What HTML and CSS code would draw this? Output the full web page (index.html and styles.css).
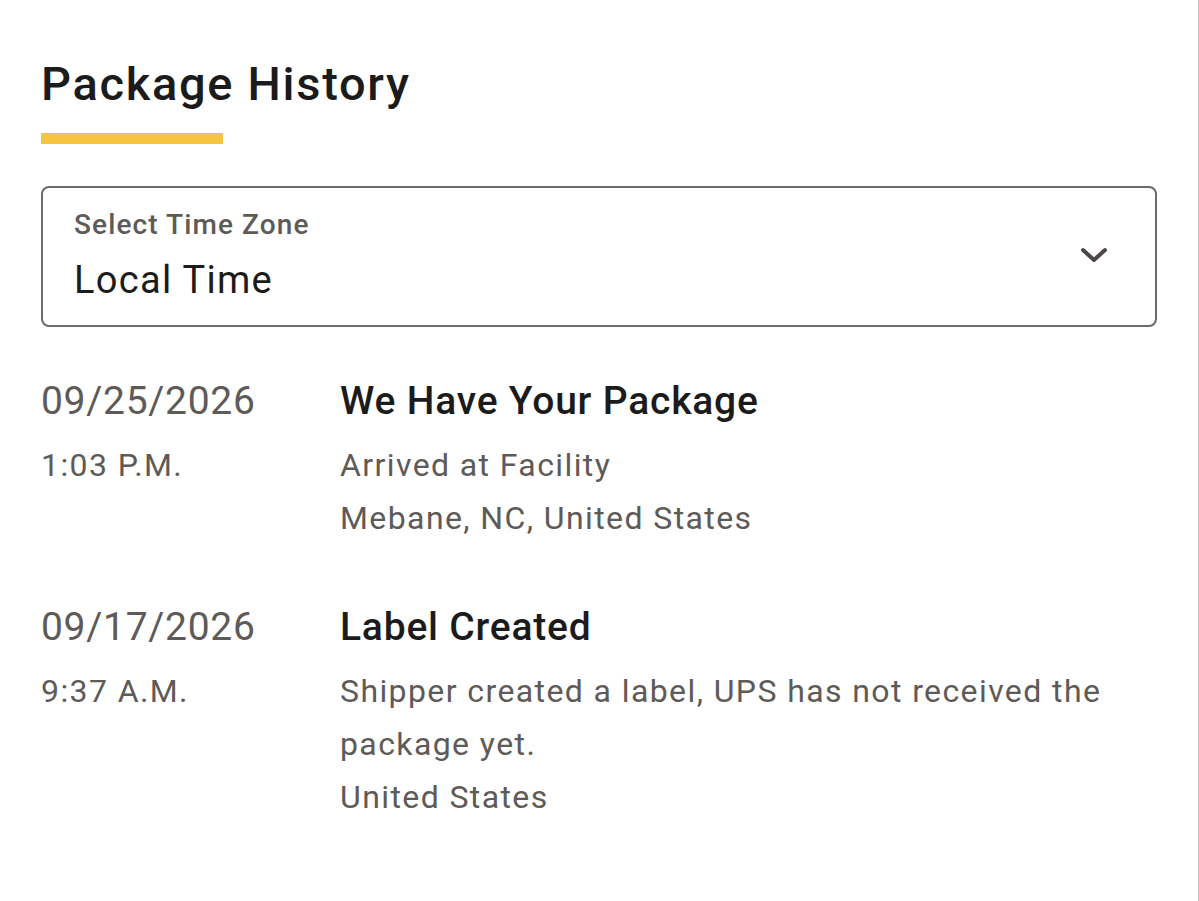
FILE: index.html
```html
<!DOCTYPE html>
<html lang="en">
<head>
  <meta charset="UTF-8" />
  <meta name="viewport" content="width=device-width, initial-scale=1.0" />
  <title>Package History</title>
  <link rel="stylesheet" href="styles.css">
</head>
<body>
  <div class="page">
    <h1 class="title">Package History</h1>
    <div class="title-bar"></div>

    <!-- time zone picker -->
    <div class="tz-select">
      <div class="tz-text">
        <div class="tz-label">Select Time Zone</div>
        <div class="tz-value">Local Time</div>
      </div>
      <svg class="chevron" width="28" height="16" viewBox="0 0 28 16">
        <polyline points="3,3 14,13 25,3" fill="none" stroke="#4d4846" stroke-width="4" stroke-linecap="round" stroke-linejoin="round" />
      </svg>
    </div>

    <!-- history rows -->
    <div class="history">
      <div class="event">
        <div class="when">
          <div class="date">09/25/2026</div>
          <div class="time">1:03 P.M.</div>
        </div>
        <div class="what">
          <div class="status">We Have Your Package</div>
          <div class="detail">Arrived at Facility<br>Mebane, NC, United States</div>
        </div>
      </div>
      <div class="event">
        <div class="when">
          <div class="date">09/17/2026</div>
          <div class="time">9:37 A.M.</div>
        </div>
        <div class="what">
          <div class="status">Label Created</div>
          <div class="detail">Shipper created a label, UPS has not received the package yet.<br>United States</div>
        </div>
      </div>
    </div>
  </div>
</body>
</html>
```

FILE: styles.css
```css
html, body {
  margin: 0;
  background-color: white;
}
body {
  font-family: Roboto, "Noto Sans", sans-serif;
}
.page {
  min-height: 901px;
  box-sizing: border-box;
  padding: 56px 41px 40px 41px;
  border-right: 1px solid #bdbdbd;
}
.title {
  margin: 0;
  font-size: 47px;
  font-weight: 500;
  line-height: normal;
  letter-spacing: 1.7px;
  color: #1b1b1b;
}
.title-bar {
  width: 182px;
  height: 11px;
  margin-top: 22px;
  background-color: #f5c542;
}
.tz-select {
  margin-top: 42px;
  display: flex;
  align-items: center;
  justify-content: space-between;
  border: 2px solid #6e6a68;
  border-radius: 8px;
  padding: 20px 47px 23px 31px;
}
.tz-label {
  font-size: 28px;
  font-weight: 500;
  line-height: 33px;
  letter-spacing: 1.1px;
  color: #5e5a58;
}
.tz-value {
  margin-top: 17px;
  font-size: 38px;
  line-height: normal;
  letter-spacing: 1.3px;
  color: #1b1b1b;
}
.chevron {
  display: block;
}
.history {
  margin-top: 51px;
}
.event {
  display: grid;
  grid-template-columns: 299px 1fr;
  margin-bottom: 59px;
}
.date, .status {
  font-size: 39px;
  line-height: 46px;
}
.date {
  letter-spacing: 0.7px;
  color: #5e5a58;
}
.status {
  font-weight: 500;
  letter-spacing: 0.8px;
  color: #1b1b1b;
}
.time, .detail {
  margin-top: 15px;
  font-size: 32px;
  line-height: 53px;
  letter-spacing: 1.4px;
  color: #5e5a58;
}
```
